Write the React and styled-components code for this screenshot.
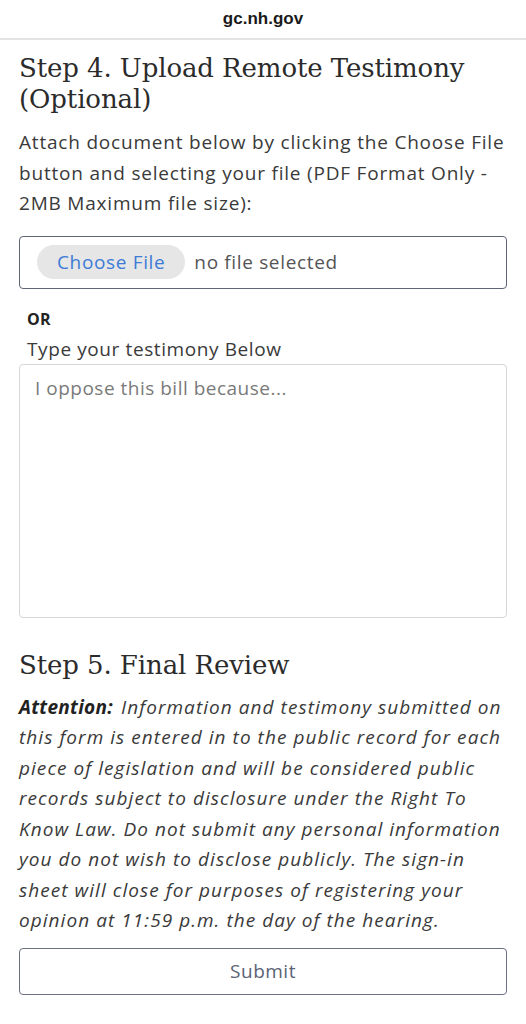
import React from 'react';
import styled, { createGlobalStyle } from 'styled-components';

const GlobalStyle = createGlobalStyle`
  body {
    margin: 0;
    background: #ffffff;
    font-family: 'Open Sans', 'Liberation Sans', sans-serif;
    color: #333333;
  }
`;

const AddressBar = styled.div`
  height: 38px;
  display: flex;
  align-items: center;
  justify-content: center;
  border-bottom: 2px solid #e4e4e4;
  font-family: 'Liberation Sans', Arial, sans-serif;
  font-weight: 700;
  font-size: 17px;
  color: #1a1a1a;
`;

const Page = styled.main`
  padding: 0 19px;
  display: flex;
  flex-direction: column;
`;

const Heading = styled.h2`
  margin: ${p => p.$top || 0}px 0 0;
  font-family: 'DejaVu Serif', 'Liberation Serif', serif;
  font-weight: 400;
  font-size: 26px;
  line-height: 31px;
  letter-spacing: -0.1px;
  color: #2b2b2b;
`;

const Text = styled.p`
  margin: ${p => p.$top || 0}px 0 0;
  font-size: 19px;
  line-height: 30.5px;
  letter-spacing: 0.8px;
  color: #3a3a3a;
`;

const Notice = styled(Text)`
  font-style: italic;
  letter-spacing: 1.05px;
  b {
    font-weight: 700;
    letter-spacing: 0.3px;
    padding-right: 2px;
    color: #222;
  }
`;

const FileBox = styled.div`
  margin-top: 17px;
  height: 53px;
  box-sizing: border-box;
  border: 1.5px solid #5f6577;
  border-radius: 4px;
  display: flex;
  align-items: center;
  padding-left: 17px;
  gap: 9px;
`;

const ChooseButton = styled.span`
  height: 34px;
  padding: 0 20px;
  display: flex;
  align-items: center;
  border-radius: 17px;
  background: #e6e6e6;
  color: #3d7bd6;
  font-size: 19px;
  letter-spacing: 0.65px;
`;

const FileStatus = styled.span`
  font-size: 19px;
  letter-spacing: 0.65px;
  color: #555;
`;

const Label = styled.div`
  padding-left: 8px;
  margin-top: ${p => p.$top || 0}px;
  font-size: ${p => (p.$bold ? 16 : 19)}px;
  font-weight: ${p => (p.$bold ? 700 : 400)};
  letter-spacing: ${p => (p.$bold ? 0.2 : 0.6)}px;
  line-height: 30px;
  color: ${p => (p.$bold ? '#222' : '#3a3a3a')};
`;

const TextArea = styled.textarea`
  height: 254px;
  box-sizing: border-box;
  border: 1.5px solid #d6d6d6;
  border-radius: 4px;
  padding: 10px 15px;
  resize: none;
  font-family: 'Open Sans', 'Liberation Sans', sans-serif;
  font-size: 19px;
  letter-spacing: 0.5px;
  line-height: 26px;
  &::placeholder {
    color: #7a7a7a;
  }
`;

const SubmitButton = styled.button`
  margin-top: 12px;
  height: 47px;
  border: 1.5px solid #6a7080;
  border-radius: 4px;
  background: #fff;
  font-family: 'Open Sans', 'Liberation Sans', sans-serif;
  font-size: 19px;
  letter-spacing: 0.5px;
  color: #5a6275;
`;

export default function App() {
  return (
    <>
      <GlobalStyle />
      <AddressBar>gc.nh.gov</AddressBar>
      <Page>
        <Heading $top={13}>Step 4. Upload Remote Testimony (Optional)</Heading>
        <Text $top={12}>
          Attach document below by clicking the Choose File button and selecting your file (PDF Format Only - 2MB Maximum file size):
        </Text>
        <FileBox>
          <ChooseButton>Choose File</ChooseButton>
          <FileStatus>no file selected</FileStatus>
        </FileBox>
        <Label $bold $top={15}>OR</Label>
        <Label>Type your testimony Below</Label>
        <TextArea placeholder="I oppose this bill because..." />
        <Heading $top={32}>Step 5. Final Review</Heading>
        <Notice $top={11}>
          <b>Attention:</b> Information and testimony submitted on this form is entered in to the public record for each piece of legislation and will be considered public records subject to disclosure under the Right To Know Law. Do not submit any personal information you do not wish to disclose publicly. The sign-in sheet will close for purposes of registering your opinion at 11:59 p.m. the day of the hearing.
        </Notice>
        <SubmitButton>Submit</SubmitButton>
      </Page>
    </>
  );
}
